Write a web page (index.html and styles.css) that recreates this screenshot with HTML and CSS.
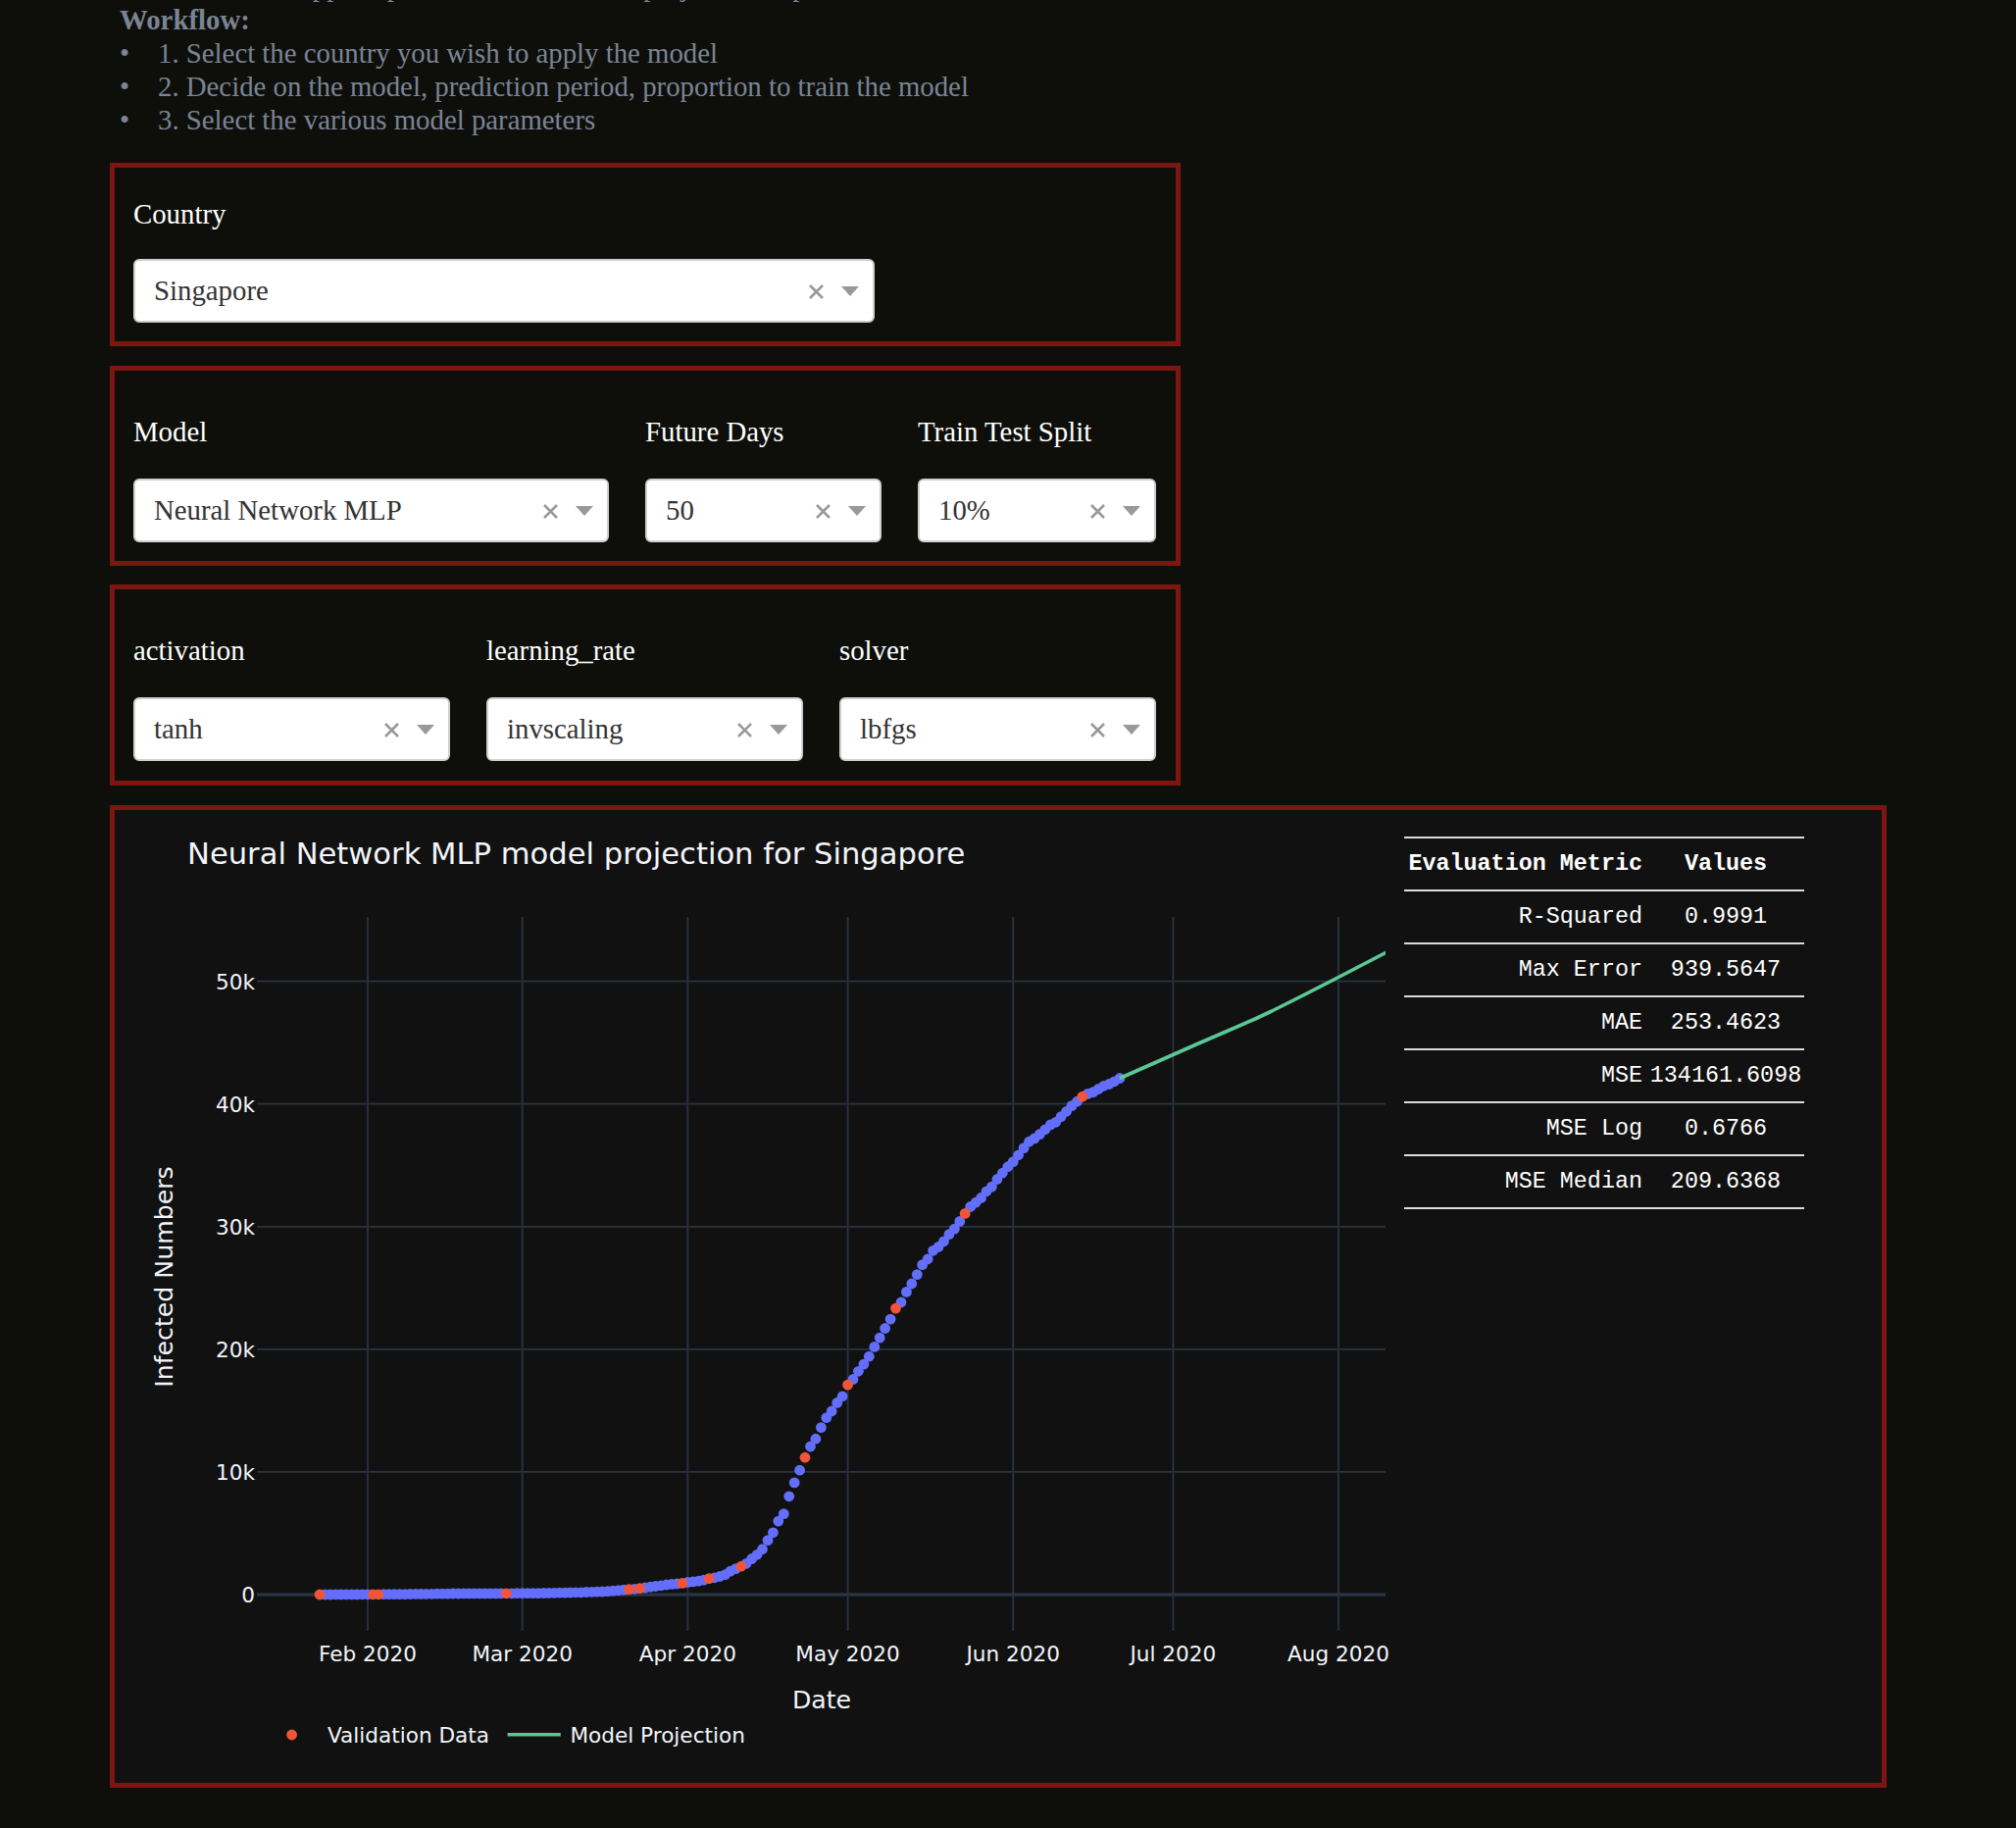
FILE: index.html
```html
<!DOCTYPE html>
<html lang="en">
<head>
<meta charset="utf-8">
<title>Model projection</title>
<link rel="stylesheet" href="styles.css">
</head>
<body>
<div class="page">
  <div class="intro">
    <p class="lead">This dashboard applies predictive models and projects the spread of cases</p>
    <p class="wf-title">Workflow:</p>
    <ul class="wf-list">
      <li><span class="bullet">•</span><span>1. Select the country you wish to apply the model</span></li>
      <li><span class="bullet">•</span><span>2. Decide on the model, prediction period, proportion to train the model</span></li>
      <li><span class="bullet">•</span><span>3. Select the various model parameters</span></li>
    </ul>
  </div>

  <section class="box box-country">
    <div class="field field-tight">
      <label class="label">Country</label>
      <div class="dd dd-country">
        <span class="dd-value">Singapore</span>
        <svg class="dd-clear" viewBox="0 0 17 15" width="17" height="15"><path d="M2 1 L15 14 M15 1 L2 14"/></svg>
        <span class="dd-arrow"></span>
      </div>
    </div>
  </section>

  <section class="box box-row cols-model">
    <div class="field">
      <label class="label">Model</label>
      <div class="dd">
        <span class="dd-value">Neural Network MLP</span>
        <svg class="dd-clear" viewBox="0 0 17 15" width="17" height="15"><path d="M2 1 L15 14 M15 1 L2 14"/></svg>
        <span class="dd-arrow"></span>
      </div>
    </div>
    <div class="field">
      <label class="label">Future Days</label>
      <div class="dd">
        <span class="dd-value">50</span>
        <svg class="dd-clear" viewBox="0 0 17 15" width="17" height="15"><path d="M2 1 L15 14 M15 1 L2 14"/></svg>
        <span class="dd-arrow"></span>
      </div>
    </div>
    <div class="field">
      <label class="label">Train Test Split</label>
      <div class="dd">
        <span class="dd-value">10%</span>
        <svg class="dd-clear" viewBox="0 0 17 15" width="17" height="15"><path d="M2 1 L15 14 M15 1 L2 14"/></svg>
        <span class="dd-arrow"></span>
      </div>
    </div>
  </section>

  <section class="box box-row cols-params">
    <div class="field">
      <label class="label">activation</label>
      <div class="dd">
        <span class="dd-value">tanh</span>
        <svg class="dd-clear" viewBox="0 0 17 15" width="17" height="15"><path d="M2 1 L15 14 M15 1 L2 14"/></svg>
        <span class="dd-arrow"></span>
      </div>
    </div>
    <div class="field">
      <label class="label">learning_rate</label>
      <div class="dd">
        <span class="dd-value">invscaling</span>
        <svg class="dd-clear" viewBox="0 0 17 15" width="17" height="15"><path d="M2 1 L15 14 M15 1 L2 14"/></svg>
        <span class="dd-arrow"></span>
      </div>
    </div>
    <div class="field">
      <label class="label">solver</label>
      <div class="dd">
        <span class="dd-value">lbfgs</span>
        <svg class="dd-clear" viewBox="0 0 17 15" width="17" height="15"><path d="M2 1 L15 14 M15 1 L2 14"/></svg>
        <span class="dd-arrow"></span>
      </div>
    </div>
  </section>

  <section class="box box-chart">
    <svg class="chart" viewBox="117 825 1300 992" width="1300" height="992">
      <defs>
        <clipPath id="plotclip"><rect x="262" y="934" width="1151" height="728"/></clipPath>
      </defs>
      <text class="c-title" x="191" y="880">Neural Network MLP model projection for Singapore</text>
      <g class="grid">
        <line x1="375" y1="934" x2="375" y2="1662"/>
        <line x1="532.7" y1="934" x2="532.7" y2="1662"/>
        <line x1="701.4" y1="934" x2="701.4" y2="1662"/>
        <line x1="864.6" y1="934" x2="864.6" y2="1662"/>
        <line x1="1033.2" y1="934" x2="1033.2" y2="1662"/>
        <line x1="1196.4" y1="934" x2="1196.4" y2="1662"/>
        <line x1="1365" y1="934" x2="1365" y2="1662"/>
        <line x1="262" y1="999.6" x2="1413" y2="999.6"/>
        <line x1="262" y1="1124.7" x2="1413" y2="1124.7"/>
        <line x1="262" y1="1249.8" x2="1413" y2="1249.8"/>
        <line x1="262" y1="1374.8" x2="1413" y2="1374.8"/>
        <line x1="262" y1="1499.9" x2="1413" y2="1499.9"/>
      </g>
      <line class="zero" x1="262" y1="1625" x2="1413" y2="1625"/>
      <g class="tick y-tick">
        <text x="260" y="1007.6">50k</text>
        <text x="260" y="1132.7">40k</text>
        <text x="260" y="1257.8">30k</text>
        <text x="260" y="1382.8">20k</text>
        <text x="260" y="1507.9">10k</text>
        <text x="260" y="1633">0</text>
      </g>
      <g class="tick x-tick">
        <text x="375" y="1692.5">Feb 2020</text>
        <text x="532.7" y="1692.5">Mar 2020</text>
        <text x="701.4" y="1692.5">Apr 2020</text>
        <text x="864.6" y="1692.5">May 2020</text>
        <text x="1033.2" y="1692.5">Jun 2020</text>
        <text x="1196.4" y="1692.5">Jul 2020</text>
        <text x="1365" y="1692.5">Aug 2020</text>
      </g>
      <text class="axis-title x-title" x="838" y="1741">Date</text>
      <text class="axis-title y-title" transform="translate(176 1301) rotate(-90)">Infected Numbers</text>
      <g clip-path="url(#plotclip)">
        <g id="train" class="pts-train"></g>
        <g id="valid" class="pts-valid"></g>
        <polyline class="proj" points="1142,1098.5 1220,1064 1280,1038 1297,1030 1320,1018.5 1365,995.5 1413,970.5 1430,961"/>
      </g>
      <g class="legend">
        <circle class="pts-valid" cx="297.6" cy="1768" r="5.4"/>
        <text x="334" y="1775.5">Validation Data</text>
        <line class="proj" x1="517.6" y1="1767.7" x2="571.8" y2="1767.7"/>
        <text x="581.4" y="1775.5">Model Projection</text>
      </g>
    </svg>

    <div class="metrics">
      <div class="cell head name">Evaluation Metric</div><div class="cell head val">Values</div>
      <div class="cell name">R-Squared</div><div class="cell val">0.9991</div>
      <div class="cell name">Max Error</div><div class="cell val">939.5647</div>
      <div class="cell name">MAE</div><div class="cell val">253.4623</div>
      <div class="cell name">MSE</div><div class="cell val">134161.6098</div>
      <div class="cell name">MSE Log</div><div class="cell val">0.6766</div>
      <div class="cell name">MSE Median</div><div class="cell val">209.6368</div>
    </div>
  </section>
</div>
<script src="script.js"></script>
</body>
</html>
```

FILE: styles.css
```css
html, body {
  margin: 0;
  padding: 0;
  background: #0e0f0b;
}

body {
  font-family: "Liberation Serif", "Times New Roman", serif;
  font-size: 28.8px;
  overflow: hidden;
}

.page {
  display: flow-root;
  padding-left: 112px;
}

.intro {
  padding-left: 10px;
  color: #7a8494;
  line-height: 34px;
}

.lead {
  margin: -31px 0 0 0;
  white-space: nowrap;
}

.wf-title {
  margin: 0;
  font-weight: bold;
}

.wf-list {
  margin: 0;
  padding: 0;
  list-style: none;
}

.wf-list li {
  display: flex;
  white-space: nowrap;
}

.bullet {
  width: 39px;
  flex: none;
}

.box {
  box-sizing: border-box;
  width: 1092px;
  border: 5px solid #7b1610;
  padding: 46px 19px 19px 19px;
  margin-top: 20px;
}

.box-country {
  margin-top: 27px;
  padding-top: 31px;
}

.box-row {
  display: grid;
  column-gap: 37px;
}

.cols-model {
  grid-template-columns: 485px 241px 243px;
}

.cols-params {
  grid-template-columns: 323px 323px 323px;
  margin-top: 19px;
  padding-bottom: 20px;
}

.field {
  display: flex;
  flex-direction: column;
  gap: 32px;
}

.field-tight {
  gap: 30px;
}

.label {
  color: #ffffff;
  line-height: 32px;
  white-space: nowrap;
}

.dd {
  box-sizing: border-box;
  height: 65px;
  background: #ffffff;
  border: 2px solid #cfcfcf;
  border-radius: 6px;
  display: flex;
  align-items: center;
  padding: 0 14px 0 19px;
}

.dd-country {
  width: 756px;
}

.dd-value {
  flex: 1;
  color: #333333;
  white-space: nowrap;
}

.dd-clear {
  flex: none;
  margin-right: 17px;
  margin-top: 1px;
}

.dd-clear path {
  stroke: #999999;
  stroke-width: 2.6;
  fill: none;
}

.dd-arrow {
  flex: none;
  width: 0;
  height: 0;
  border-top: 10px solid #999999;
  border-left: 9px solid transparent;
  border-right: 9px solid transparent;
}

.box-chart {
  width: 1812px;
  padding: 0;
  margin-top: 20px;
  background: #111111;
  display: flex;
  align-items: flex-start;
}

.chart {
  display: block;
  flex: none;
}

.chart text {
  font-family: "DejaVu Sans", Verdana, sans-serif;
  fill: #f2f5fa;
}

.c-title {
  font-size: 30.6px;
}

.grid line {
  stroke: #283442;
  stroke-width: 1.8;
}

.zero {
  stroke: #283442;
  stroke-width: 3.6;
}

.tick text {
  font-size: 21.6px;
}

.y-tick text {
  text-anchor: end;
}

.x-tick text {
  text-anchor: middle;
}

.axis-title {
  font-size: 25.2px;
  text-anchor: middle;
}

.pts-train {
  fill: #636efa;
}

.pts-valid {
  fill: #ef553b;
}

.proj {
  fill: none;
  stroke: #5ac896;
  stroke-width: 3.6;
  stroke-linejoin: round;
}

.legend text {
  font-size: 21.6px;
}

.metrics {
  display: grid;
  grid-template-columns: 248px 160px;
  margin: 27px 0 0 15px;
  border-top: 2px solid #dcdcdc;
  font-family: "Liberation Mono", "Courier New", monospace;
  font-size: 23.4px;
  color: #ffffff;
}

.cell {
  box-sizing: content-box;
  height: 52px;
  border-bottom: 2px solid #dcdcdc;
  display: flex;
  align-items: center;
  white-space: nowrap;
}

.cell.name {
  justify-content: flex-end;
  padding-right: 5px;
  width: 243px;
}

.cell.val {
  justify-content: center;
}

.cell.head {
  font-weight: bold;
}
```

FILE: script.js
```js
(function () {
  var vals = [1,3,3,4,5,7,7,10,13,
    16,18,18,24,28,28,30,33,40,45,47,50,58,67,72,75,77,81,84,84,85,85,89,89,91,93,96,98,102,
    106,108,110,110,117,130,138,150,150,160,178,178,200,212,226,243,266,313,345,385,432,455,509,558,631,683,732,802,844,879,926,
    1000,1049,1114,1189,1309,1375,1481,1623,1910,2108,2299,2532,2918,3252,3699,4427,5050,5992,6588,8014,9125,10141,11178,12075,12693,13624,14423,14951,15641,16169,
    17101,17548,18205,18778,19410,20198,20939,21707,22460,23336,23822,24671,25346,26098,26891,27356,28038,28343,28794,29364,29812,30426,31068,31616,31960,32343,32876,33249,33860,34366,34884,
    35292,35836,36405,36922,37183,37527,37910,38296,38514,38965,39387,39850,40197,40604,40818,40969,41216,41473,41615,41833,42095];
  var validIdx = {0:1,10:1,11:1,35:1,58:1,60:1,68:1,73:1,79:1,91:1,99:1,108:1,121:1,143:1};
  var NS = 'http://www.w3.org/2000/svg';
  var train = document.getElementById('train');
  var valid = document.getElementById('valid');
  for (var i = 0; i < vals.length; i++) {
    var c = document.createElementNS(NS, 'circle');
    c.setAttribute('cx', (375 + (i - 9) * 5.4396).toFixed(1));
    c.setAttribute('cy', (1625 - vals[i] * 0.012508).toFixed(1));
    c.setAttribute('r', '5.4');
    (validIdx[i] ? valid : train).appendChild(c);
  }
})();
```
